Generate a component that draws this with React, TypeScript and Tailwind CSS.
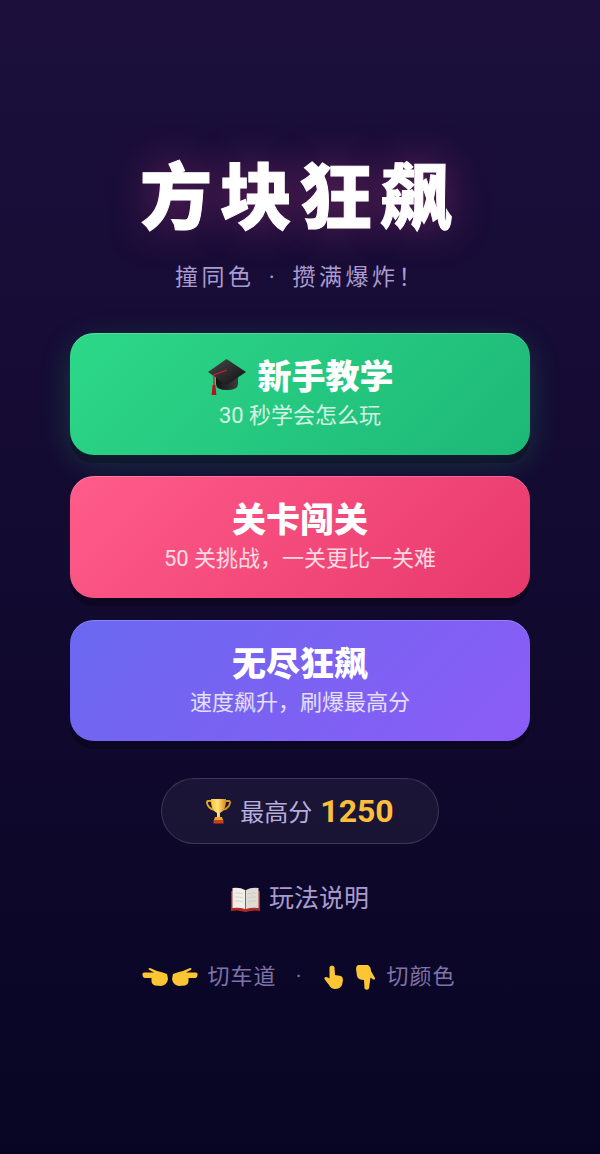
import React from "react";

const font = { fontFamily: 'Roboto, "Noto Sans CJK SC", "Noto Sans", sans-serif' };

function Cap() {
  return (
    <svg width="40" height="38" viewBox="0 0 40 38" className="block">
      <defs>
        <linearGradient id="capTop" x1="0" y1="0" x2="1" y2="1">
          <stop offset="0" stopColor="#4a4a4e" />
          <stop offset="1" stopColor="#0e0e10" />
        </linearGradient>
        <linearGradient id="capBody" x1="0" y1="0" x2="1" y2="0">
          <stop offset="0" stopColor="#141416" />
          <stop offset="1" stopColor="#3c3c40" />
        </linearGradient>
      </defs>
      <path d="M9 18 V26 Q9 32 20 32 Q31 32 31 26 V18 Z" fill="url(#capBody)" />
      <path d="M19.5 1 L39 14 L19.5 27 L1 14 Z" fill="url(#capTop)" />
      <path d="M20 12 L7 17 V28" fill="none" stroke="#c8202a" strokeWidth="1.3" />
      <path d="M5.6 27 H8.4 L9.4 37 H4.6 Z" fill="#b5141e" />
    </svg>
  );
}

function Trophy() {
  return (
    <svg width="25" height="26" viewBox="0 0 25 26" className="block">
      <defs>
        <linearGradient id="cup" x1="0" y1="0" x2="1" y2="0">
          <stop offset="0" stopColor="#f7c33a" />
          <stop offset="0.45" stopColor="#ffe27a" />
          <stop offset="1" stopColor="#d98a12" />
        </linearGradient>
      </defs>
      <path d="M6 3 H2 Q0.8 3 1 5 Q2 10 8 12" fill="none" stroke="#e6a51e" strokeWidth="1.8" />
      <path d="M19 3 H23 Q24.2 3 24 5 Q23 10 17 12" fill="none" stroke="#d9921a" strokeWidth="1.8" />
      <path d="M5 1 H20 Q20.5 12 14 15 L14 19 H11 L11 15 Q4.5 12 5 1 Z" fill="url(#cup)" />
      <path d="M9 19 H16 L17 22 H8 Z" fill="#e9a722" />
      <path d="M7.5 22 H17.5 V25.5 H7.5 Z" fill="#c8401c" />
    </svg>
  );
}

function Book() {
  return (
    <svg width="29" height="25" viewBox="0 0 29 25" className="block">
      <path d="M0 4 H29 V24 Q22 22.5 14.5 25 Q7 22.5 0 24 Z" fill="#b22a20" />
      <path d="M1.5 1 Q9 0 14 3 V22 Q8 20 1.5 21 Z" fill="#f2efe8" />
      <path d="M27.5 1 Q20 0 15 3 V22 Q21 20 27.5 21 Z" fill="#dfdcd6" />
      <path d="M14 3 H15 V22 H14 Z" fill="#6d6a6a" />
      <path d="M4 6 Q8 5.5 12 7 M4 10 Q8 9.5 12 11 M4 14 Q8 13.5 12 15 M17 7 Q21 5.5 25 6 M17 11 Q21 9.5 25 10 M17 15 Q21 13.5 25 14" fill="none" stroke="#c9c6c2" strokeWidth="0.7" />
    </svg>
  );
}

const handFill = "#fcc534";

function HandLeft({ flip }: { flip?: boolean }) {
  return (
    <svg width="26" height="18" viewBox="0 0 26 18" className={flip ? "block -scale-x-100" : "block"}>
      <path d="M0.5 7 Q0 4.5 2.5 4.5 L12 4.5 L7 1.8 Q5.5 0 8 0 L15 3 Q20 4 25 6 L26 11 Q25 17 19 18 L13 17.5 Q9.5 16 9.5 13 L9.5 10 L2.5 10 Q0.5 9.5 0.5 7 Z" fill={handFill} />
    </svg>
  );
}

function HandUp() {
  return (
    <svg width="19" height="24" viewBox="0 0 19 24" className="block">
      <path d="M5.5 2 Q8 -1 10.5 2 L11 10 L17 11 Q19 12 19 15 L18 20 Q16 24 11 24 Q7 24 5 20 L0.5 14 Q0 12 2 12 Q4 12 5.5 13.5 Z" fill={handFill} />
    </svg>
  );
}

function HandDown() {
  return (
    <svg width="19" height="25" viewBox="0 0 19 25" className="block">
      <path d="M2 0 L12 0 Q15 2 15 6 L19 13 Q19.5 15 17 14.5 L14.5 12.5 L13 23.5 Q10.5 26 8.5 23.5 L8 15 Q2 15 1 11 L0 4 Q0 1 2 0 Z" fill={handFill} />
    </svg>
  );
}

function Btn({ title, sub, cls, icon }: { title: string; sub: string; cls: string; icon?: React.ReactNode }) {
  return (
    <div className={`w-[460px] h-[121.5px] rounded-[24px] pt-[24px] flex flex-col items-center ${cls}`}>
      <div className="text-[34px] leading-[40px] font-black text-white flex items-center gap-[11px]">
        {icon}
        {title}
      </div>
      <div className="text-[22px] leading-[30px] text-white/80 mt-[4px]">{sub}</div>
    </div>
  );
}

export default function App() {
  return (
    <div style={font} className="w-[600px] h-[1154px] overflow-hidden flex flex-col items-center bg-[linear-gradient(180deg,#1c0f3c_0%,#080524_100%)]">
      <h1 className="mt-[151px] text-[72px] leading-[96px] font-black text-white tracking-[8px] [-webkit-text-stroke:1px_white] [text-shadow:0_0_40px_rgba(236,72,153,0.4)]">方块狂飙</h1>
      <p className="mt-[14px] text-[23px] leading-[34px] tracking-[3.5px] text-[#a99bd0]">
        撞同色<span className="mx-[5px]"> · </span>{"攒满爆炸\uFF01"}
      </p>
      <div className="mt-[38px] flex flex-col gap-[21.75px]">
        <Btn title="新手教学" icon={<Cap />} sub={"30 秒学会怎么玩"} cls="bg-[linear-gradient(135deg,#2dd888,#1db877)] shadow-[inset_0_1px_0_rgba(255,255,255,0.2),0_8px_0_rgba(0,0,0,0.25),0_8px_32px_rgba(52,222,140,0.2)]" />
        <Btn title="关卡闯关" sub={"50 关挑战\uFF0C一关更比一关难"} cls="bg-[linear-gradient(135deg,#ff5c8a,#e8386c)] shadow-[inset_0_1px_0_rgba(255,255,255,0.2),0_8px_0_rgba(0,0,0,0.25)]" />
        <Btn title="无尽狂飙" sub={"速度飙升\uFF0C刷爆最高分"} cls="bg-[linear-gradient(135deg,#6a68f0,#8b5cf6)] shadow-[inset_0_1px_0_rgba(255,255,255,0.2),0_8px_0_rgba(0,0,0,0.25)]" />
      </div>
      <div className="mt-[37px] w-[278px] h-[66px] rounded-full border border-white/15 bg-white/5 flex items-center justify-center">
        <Trophy />
        <span className="ml-[9px] text-[24px] pt-[3px] text-[#b8aede]">最高分</span>
        <span className="ml-[8px] text-[32px] font-bold text-[#fbbf3c]">1250</span>
      </div>
      <div className="mt-[32px] text-[25px] leading-[46px] text-[#a99bd0] flex items-center gap-[9px]"><Book />玩法说明</div>
      <div className="mt-[39px] mr-[2px] h-[32px] text-[22px] leading-[32px] text-[#7f72a8] tracking-[1px] flex items-center">
        <HandLeft />
        <span className="ml-[4px]"><HandLeft flip /></span>
        <span className="ml-[9px]">切车道</span>
        <span className="ml-[19px] w-[7px] text-center">·</span>
        <span className="ml-[21px]"><HandUp /></span>
        <span className="ml-[13px]"><HandDown /></span>
        <span className="ml-[12px]">切颜色</span>
      </div>
    </div>
  );
}
